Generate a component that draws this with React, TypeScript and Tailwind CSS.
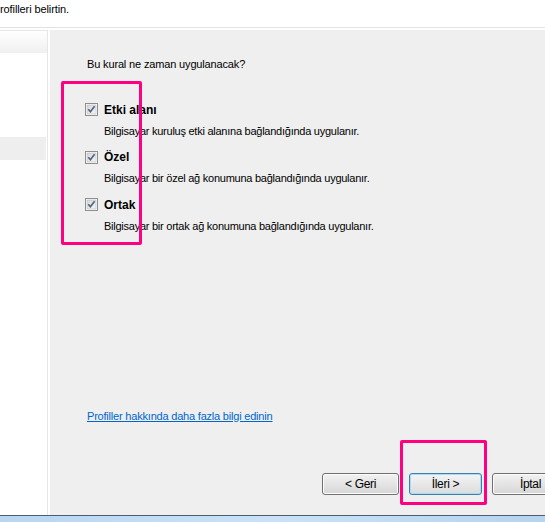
import React from "react";

const font = { fontFamily: '"Liberation Sans", Arial, sans-serif' };

function Check() {
  return (
    <svg width="13" height="13" viewBox="0 0 13 13" className="shrink-0">
      <defs>
        <linearGradient id="cb" x1="0" y1="0" x2="1" y2="1">
          <stop offset="0" stopColor="#d6d6d6" />
          <stop offset="1" stopColor="#f6f6f6" />
        </linearGradient>
      </defs>
      <rect x="0.5" y="0.5" width="12" height="12" fill="#fff" stroke="#8e8f8f" />
      <rect x="2" y="2" width="9" height="9" fill="url(#cb)" stroke="#b9b9b9" strokeWidth="0.6" />
      <path d="M3.3 6.2 L5.4 8.8 L9.6 3.2" fill="none" stroke="#4d6185" strokeWidth="1.6" />
    </svg>
  );
}

function Option({ title, desc }: { title: string; desc: string }) {
  return (
    <div>
      <div className="flex items-center gap-[6px]">
        <Check />
        <span className="text-[12px] font-bold text-black">{title}</span>
      </div>
      <div className="pl-[19px] mt-[4px] text-[11px] tracking-[-0.25px] text-black">{desc}</div>
    </div>
  );
}

function WinButton({ label, focused }: { label: string; focused?: boolean }) {
  return (
    <button
      className={`h-[22px] rounded-[3px] border text-[12px] tracking-[-0.3px] text-black bg-gradient-to-b ${
        focused
          ? "w-[73px] border-[#3c7fb1] from-[#f4f4f4] to-[#dcdcdc] shadow-[inset_0_0_0_1px_#a8dcf5]"
          : "w-[77px] border-[#707070] from-[#f2f2f2] to-[#d6d6d6] shadow-[inset_0_0_0_1px_#fcfcfc]"
      }`}
    >
      {label}
    </button>
  );
}

export default function App() {
  return (
    <div className="w-[545px] h-[522px] bg-white relative overflow-hidden flex flex-col" style={font}>
      {/* header strip */}
      <div className="h-[27px] shrink-0 pt-px text-[11px] tracking-[-0.1px] text-black">
        rofilleri belirtin.
      </div>
      <div className="h-px shrink-0 bg-[#e2e2e2]" />
      <div className="h-[2px] shrink-0" />

      <div className="flex flex-1 min-h-0">
        {/* step list */}
        <div className="w-[48px] shrink-0 border-t border-r border-[#e6e6e6] flex flex-col">
          <div className="h-[22px] bg-gradient-to-b from-[#ffffff] to-[#f0f0f0]" />
          <div className="h-[84px]" />
          <div className="h-[23px] mr-[1px] bg-[#eeeeee]" />
        </div>
        <div className="w-[2px] shrink-0" />

        {/* page body */}
        <div className="flex-1 bg-[#efefef] flex flex-col pl-[37px]">
          <div className="pt-[26px] text-[11px] tracking-[-0.15px] text-black">Bu kural ne zaman uygulanacak?</div>
          <div className="mt-[28px] -ml-[2px] flex flex-col gap-[9px]">
            <Option title="Etki alanı" desc="Bilgisayar kuruluş etki alanına bağlandığında uygulanır." />
            <Option title="Özel" desc="Bilgisayar bir özel ağ konumuna bağlandığında uygulanır." />
            <Option title="Ortak" desc="Bilgisayar bir ortak ağ konumuna bağlandığında uygulanır." />
          </div>
          <div className="flex-1" />
          <a href="#" className="text-[11px] tracking-[-0.2px] text-[#0066cc] underline">
            Profiller hakkında daha fazla bilgi edinin
          </a>
          <div className="h-[49px]" />
          <div className="flex gap-[10px] pl-[235px] pb-[20px]">
            <WinButton label="< Geri" />
            <WinButton label="İleri >" focused />
            <WinButton label="İptal" />
          </div>
        </div>
      </div>

      {/* taskbar edge */}
      <div className="h-px shrink-0 bg-[#505c68]" />
      <div className="h-[6px] shrink-0 bg-gradient-to-r from-[#b8d6f2] via-[#c9e2f8] to-[#b5d4f0]" />

      {/* highlight boxes */}
      <div className="absolute left-[61px] top-[81px] w-[81px] h-[164px] border-[3px] border-[#ff0080] rounded-[2px]" />
      <div className="absolute left-[400px] top-[440px] w-[87px] h-[65px] border-[3px] border-[#ff0080] rounded-[2px]" />
    </div>
  );
}
